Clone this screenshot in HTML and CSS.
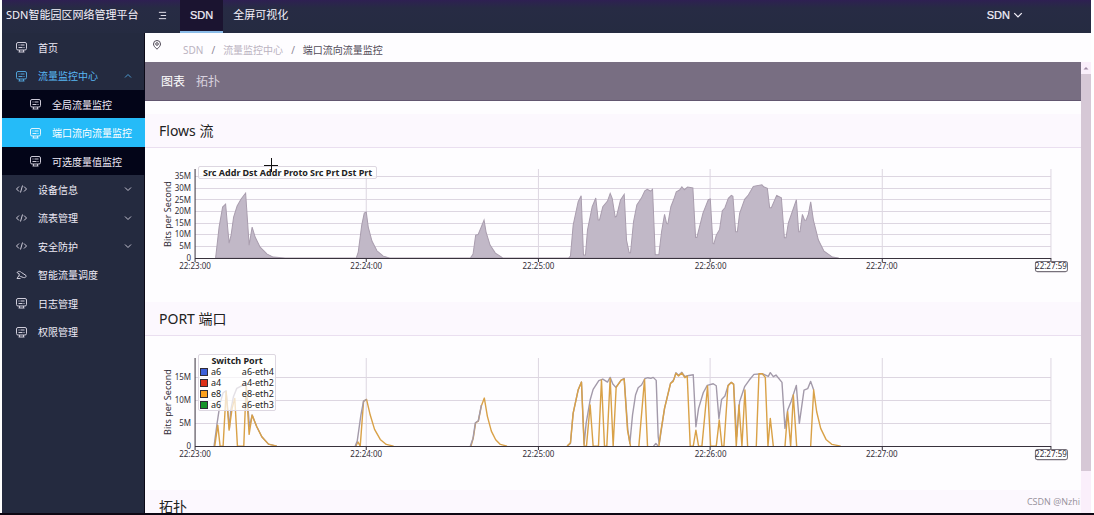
FILE: index.html
```
<!DOCTYPE html>
<html lang="zh-CN">
<head>
<meta charset="utf-8">
<title>SDN智能园区网络管理平台</title>
<link rel="stylesheet" href="styles.css">
</head>
<body>
<svg class="defs" aria-hidden="true">
  <symbol id="monitor" viewBox="0 0 12 12"><rect x="1" y="1.500" width="10" height="7.500" rx="1.500"/><path d="M3 4h1M5 4h4M3 6.500h4M8 6.500h1M4 9v2M8 9v2M3 11h6"/></symbol>
  <symbol id="code" viewBox="0 0 12 12"><path d="M3.500 3.500L1 6l2.500 2.500M8.500 3.500L11 6 8.500 8.500M7 2.500L5 9.500"/></symbol>
  <symbol id="flow" viewBox="0 0 12 12"><path d="M1.500 3.500C3 1.500 5 2.500 6 3.500L10.500 6.500C11 8 9.500 9 8 8.500L5 7.500C3.500 7 3 6 4 5M1.500 3.500L4 5M3.500 6.500L1.500 9.500H5"/></symbol>
  <symbol id="chevron" viewBox="0 0 8 8"><path d="M1 2.500l3 3 3-3"/></symbol>
</svg>
<div class="app">
  <header class="topbar">
    <h1 class="brand">SDN智能园区网络管理平台</h1>
    <button class="fold" aria-label="折叠菜单"><svg viewBox="0 0 10 10"><path d="M1 1.500h8M3 5h6M1 8.500h8"/></svg></button>
    <a class="tab tab-on" href="#">SDN</a>
    <a class="tab" href="#">全屏可视化</a>
    <button class="user">SDN <svg viewBox="0 0 8 8"><use href="#chevron"/></svg></button>
  </header>
  <nav class="side">
    <a class="item" href="#"><svg class="ico"><use href="#monitor"/></svg>首页</a>
    <a class="item open" href="#"><svg class="ico"><use href="#monitor"/></svg>流量监控中心<svg class="arrow up"><use href="#chevron"/></svg></a>
    <a class="item sub" href="#"><svg class="ico"><use href="#monitor"/></svg>全局流量监控</a>
    <a class="item sub current" href="#"><svg class="ico"><use href="#monitor"/></svg>端口流向流量监控</a>
    <a class="item sub" href="#"><svg class="ico"><use href="#monitor"/></svg>可选度量值监控</a>
    <a class="item" href="#"><svg class="ico"><use href="#code"/></svg>设备信息<svg class="arrow"><use href="#chevron"/></svg></a>
    <a class="item" href="#"><svg class="ico"><use href="#code"/></svg>流表管理<svg class="arrow"><use href="#chevron"/></svg></a>
    <a class="item" href="#"><svg class="ico"><use href="#code"/></svg>安全防护<svg class="arrow"><use href="#chevron"/></svg></a>
    <a class="item" href="#"><svg class="ico"><use href="#flow"/></svg>智能流量调度</a>
    <a class="item" href="#"><svg class="ico"><use href="#monitor"/></svg>日志管理</a>
    <a class="item" href="#"><svg class="ico"><use href="#monitor"/></svg>权限管理</a>
  </nav>
  <main class="main">
    <div class="crumbs">
      <svg class="pin" viewBox="0 0 10 10"><path d="M5 9.200C2.500 7 1.500 5.500 1.500 4a3.500 3.500 0 0 1 7 0C8.500 5.500 7.500 7 5 9.200z"/><circle cx="5" cy="4" r="1.300"/></svg>
      <a class="faint" href="#">SDN</a><span class="slash">/</span><a class="faint" href="#">流量监控中心</a><span class="slash">/</span><a href="#">端口流向流量监控</a>
    </div>
    <div class="frame">
      <div class="scroll">
        <div class="tools"><button class="view view-on">图表</button><button class="view">拓扑</button></div>
        <section>
          <h2 class="title">Flows 流</h2>
          <div class="chart">
            <svg class="plot" viewBox="145 148 935 154">
              <path class="grid" d="M195 176.500H1050M195 188.500H1050M195 199.500H1050M195 211.500H1050M195 223.500H1050M195 234.500H1050M195 246.500H1050M366 169V258M538 169V258M709.500 169V258M881.500 169V258M1050 169V258"/>
              <polygon class="area" points="215.5,258 219,227 222.5,207 225.500,204 227.500,227 229,243 231,235 233.500,217 237,206 241,199 245.500,193 249,245 252,227 255,237 260,247 267,254 273,257 285,258 356,258 358,252 361.500,225 364,213 366,212 368,227 371.700,241 376.700,250.700 383,256 390,258 470,258 472.700,254 475.300,235 477.700,234.500 481,226.700 483.700,220 485.700,232 489.700,245 495,253 502.700,258 568,258 570,256 572.700,225 577.700,201.700 580.700,195.700 583,255 585,255 587,230 591.700,206.700 595.300,198 597.700,220 599,220 602.300,206.700 607,201 609.700,193.300 611.700,198.300 614.700,217 616,216.300 620,200 623.700,194.300 626,240 628.700,252.700 630,252.700 633,221.700 636.300,205 640.700,198.300 644.300,190.700 646.700,189.300 650,191 652,189.300 654.700,254.700 658.300,254.700 661,231.700 664,214.300 666,223.300 667.300,223.700 670.300,206.700 673.300,199 675.700,191.700 679,190 681.300,186.700 683.700,189.700 687,187 692.300,188 695,237.300 696.300,237.300 702.300,213.300 707.700,199.700 709.700,199 712.300,243.300 713.300,243.700 715.700,235 719,229.300 721.700,210.700 724.300,207.700 727.700,198.300 730.700,195.300 732.300,196.300 735,231.700 736.700,231.700 739,213.300 744,199.300 747.700,195 752.700,186.300 761.300,184.700 763,186.700 766.700,188.300 769,207.700 770.700,207.700 776,195.300 780.700,197.700 783.700,237.700 785.300,237.700 787.700,222.700 795.700,199.700 798,231.700 799.300,231.700 801.700,214.300 804,220.300 805.300,220.300 807.700,214 810,201.700 812.700,220 817.700,240 823.300,251 831.700,257 838,258"/>
              <path class="axis" d="M195 169V262M195 258.500H1050V262M366 258V262M538 258V262M709.500 258V262M881.500 258V262"/>
              <g class="ylab"><text x="191" y="179">35M</text><text x="191" y="191">30M</text><text x="191" y="203">25M</text><text x="191" y="214">20M</text><text x="191" y="226">15M</text><text x="191" y="237">10M</text><text x="191" y="249">5M</text><text x="191" y="261">0</text></g>
              <rect class="pill" x="1034.500" y="261.500" width="32" height="10" rx="2"/>
              <g class="xlab"><text x="195" y="269">22:23:00</text><text x="366" y="269">22:24:00</text><text x="538" y="269">22:25:00</text><text x="710" y="269">22:26:00</text><text x="881" y="269">22:27:00</text><text x="1050" y="269">22:27:59</text></g>
              <text class="unit" transform="translate(171 214) rotate(-90)">Bits per Second</text>
            </svg>
            <table class="legend"><tr><th>Src Addr</th><th>Dst Addr</th><th>Proto</th><th>Src Prt</th><th>Dst Prt</th></tr></table>
            <svg class="cross" viewBox="0 0 14 14"><path d="M7.500 0v14M0 7.500h14"/></svg>
          </div>
        </section>
        <section>
          <h2 class="title">PORT 端口</h2>
          <div class="chart">
            <svg class="plot" viewBox="145 336 935 154">
              <path class="grid" d="M195 377.500H1050M195 400.500H1050M195 423.500H1050M366 358V446M538 358V446M709.500 358V446M881.500 358V446M1050 358V446"/>
              <g class="lines" transform="translate(140 340) scale(.3333)">
                <polyline class="total" points="222,318 231,250 240,190 249,158 258,152 268,265 272,210 280,170 290,145 303,138 318,130 328,260 336,225 350,260 365,290 385,312 410,318"/>
                <polyline class="port" points="224,318 233,255 240,318 249,318 258,155 267,270 276,205 284,175 292,318 311,318 318,138 327,283 336,225 350,260 365,290 385,312 410,318"/>
                <polyline class="port" points="647,318 653,305 660,318 670,184 679,178 690,225 703,268 720,298 738,313 760,318"/>
                <polyline class="total" points="645,318 651,303 662,225 670,183 679,178"/>
                <polyline class="port" points="992,318 999,293 1006,248 1014,243 1023,198 1032,174 1041,228 1053,273 1066,299 1080,313 1100,318"/>
                <polyline class="total" points="990,318 998,295 1005,248 1014,242 1023,195"/>
              </g>
              <g class="lines" transform="translate(540 340) scale(.3333)">
                <polyline class="total" points="80,318 90,310 98,220 113,150 123,126 131,312 137,250 149,180 158,148 175,122 187,117 201,126 209,112 217,132 226,142 242,120 251,115 262,270 268,310 276,225 285,165 293,143 303,135 313,116 322,113 331,115 338,112 347,121 353,290 356,312 372,205 390,130 400,118 406,98 414,106 424,97 433,110 441,107 458,104 466,260 474,205 488,158 500,136 518,131 527,137 535,236 543,178 553,168 563,135 572,127 579,132 588,290 597,185 612,140 626,120 640,103 665,101 683,109 689,98 698,110 706,105 724,127 733,265 741,210 751,185 767,136 776,250 790,150 801,146 810,124 819,150"/>
                <polyline class="port" points="80,318 90,308 98,220 113,150 123,126 131,318 138,318 149,195 158,318 174,318 183,120 192,318 199,318 209,115 218,318 227,142 242,120 251,117 261,270 270,318"/>
                <polyline class="port" points="295,318 312,118 321,318"/>
                <polyline class="total" points="339,318 346,310 353,318"/>
                <polyline class="port" points="355,318 360,280 372,205 390,130 398,124 406,100 414,108 424,99 433,113 440,108 449,318 458,318 466,270 474,318 484,318 501,138 510,318 527,318 536,240 544,318 550,318 562,138 572,127 579,133 587,318 595,195 604,318 613,150 621,318"/>
                <polyline class="port" points="647,318 655,101 665,101 674,112 682,318 689,235 698,318"/>
                <polyline class="port" points="733,318 741,215 750,318 758,165 768,318"/>
                <polyline class="port" points="810,318 819,150 828,215 840,265 856,298 874,313 900,318"/>
              </g>
              <path class="axis" d="M195 358V450M195 446.500H1050V450M366 446V450M538 446V450M709.500 446V450M881.500 446V450"/>
              <g class="ylab"><text x="191" y="380">15M</text><text x="191" y="403">10M</text><text x="191" y="426">5M</text><text x="191" y="449">0</text></g>
              <rect class="pill" x="1034.500" y="449.500" width="32" height="10" rx="2"/>
              <g class="xlab"><text x="195" y="457">22:23:00</text><text x="366" y="457">22:24:00</text><text x="538" y="457">22:25:00</text><text x="710" y="457">22:26:00</text><text x="881" y="457">22:27:00</text><text x="1050" y="457">22:27:59</text></g>
              <text class="unit" transform="translate(171 402) rotate(-90)">Bits per Second</text>
            </svg>
            <table class="legend ports">
              <tr><th colspan="3">Switch Port</th></tr>
              <tr><td><i class="key blue"></i></td><td>a6</td><td>a6-eth4</td></tr>
              <tr><td><i class="key red"></i></td><td>a4</td><td>a4-eth2</td></tr>
              <tr><td><i class="key orange"></i></td><td>e8</td><td>e8-eth2</td></tr>
              <tr><td><i class="key green"></i></td><td>a6</td><td>a6-eth3</td></tr>
            </table>
          </div>
        </section>
        <section><h2 class="title">拓扑</h2></section>
      </div>
      <div class="bar"><svg viewBox="0 0 10 12"><path d="M2.500 7.500L5 5l2.500 2.500z"/></svg><div class="thumb"></div></div>
    </div>
    <span class="mark">CSDN @Nzhi</span>
  </main>
</div>
</body>
</html>
```
FILE: styles.css
```
* { box-sizing: border-box; }
body { margin: 0; background: #fff; color: #222; font-family: "Noto Sans", "Noto Sans CJK SC", sans-serif; }
button { border: 0; background: none; padding: 0; color: inherit; font: inherit; }
a { color: inherit; text-decoration: none; }
svg { fill: none; stroke: currentColor; }
.defs { display: none; }
.app { height: 100vh; padding: 0 3px 0 2px; border-bottom: 2px solid #0d0713; display: grid; grid-template: 33px minmax(0, 1fr) / 143px minmax(0, 1fr); overflow: hidden; }

.topbar { grid-column: 1 / 3; display: flex; align-items: stretch; background: linear-gradient(#2e2052, #272b44 8px, #252b41); color: #f4f1fa; font-size: 11px; line-height: 30px; }
.brand { margin: 0; padding-left: 4px; width: 142px; font-size: 11px; font-weight: 400; white-space: nowrap; }
.fold { width: 36px; display: flex; align-items: center; justify-content: center; padding-bottom: 2px; }
.fold svg { width: 9px; height: 9px; }
.tab { padding: 0 10px; font-size: 11px; white-space: nowrap; }
.tab-on, .user { font-family: "Liberation Sans", sans-serif; -webkit-text-stroke: 0.2px; }
.tab-on { background: #1b1430; border-bottom: 2px solid #8bbce8; }
.user { margin-left: auto; padding-right: 68px; display: flex; align-items: center; gap: 3px; height: 30px; font-size: 11px; }
.user svg { width: 10px; height: 10px; }

.side { display: grid; grid-template-rows: repeat(11, 1fr); height: 100%; padding-bottom: 167px; background: #242a3f; border-right: 1px solid #0c0a18; color: #eeeaf6; font-size: 10px; }
.item { display: flex; align-items: center; padding: 0 13px; white-space: nowrap; }
.ico { width: 13px; height: 12px; margin-right: 10px; opacity: 0.85; }
.arrow { width: 8px; height: 8px; margin-left: auto; opacity: 0.8; }
.up { transform: rotate(180deg); }
.open { color: #58b7f3; }
.sub { padding-left: 27px; background: #030518; }
.current { background: #25bbf8; color: #fff; }

.main { position: relative; display: grid; grid-template-rows: 29px minmax(0, 1fr); background: #fefdff; min-width: 0; }
.crumbs { display: flex; align-items: center; gap: 8px; padding: 4px 7px 0; font-size: 10px; white-space: nowrap; color: #514b58; }
.pin { width: 10px; height: 10px; margin: 0 13px 10px 0; }
.faint { color: #bbb3c1; }
.slash { color: #8d8594; }
.frame { display: flex; min-height: 0; }
.scroll { flex: 1; min-width: 0; overflow: hidden; }
.tools { height: 39px; margin-bottom: 13px; padding: 0 16px; display: flex; align-items: center; gap: 11px; background: #786e82; border-bottom: 1px solid #625670; font-size: 12px; color: #d9d2df; }
.view-on { color: #fff; }
.title { margin: 0; height: 34px; padding: 0 14px; background: #fcf8fe; border-bottom: 1px solid #eadff0; font-size: 14px; line-height: 33px; font-weight: 400; }

.chart { position: relative; }
.plot { display: block; width: 100%; height: auto; font-size: 8px; }
.grid { stroke: #ddd6e1; }
.area { fill: #c1b8c7; stroke: #a99dae; }
.axis { stroke: #38323d; }
.pill { fill: #fff; stroke: #77717b; }
.plot text { fill: #332f38; stroke: none; }
.ylab { text-anchor: end; }
.xlab, .unit { text-anchor: middle; }
.unit { font-size: 9px; }
.lines polyline { vector-effect: non-scaling-stroke; stroke-linejoin: round; stroke-width: 1.4; }
.total { stroke: #a39aaa; }
.port { stroke: #d9a147; }
.legend { position: absolute; left: 53px; top: 18px; padding: 0 3px; border: 1px solid #ddd7e1; border-radius: 2px; background: rgba(255, 255, 255, 0.7); border-spacing: 0; font-size: 9px; line-height: 11px; white-space: nowrap; }
.legend th, .legend td { padding: 0 1px; font-weight: 700; }
.legend td { font-weight: 400; }
.ports { width: 78px; padding: 0; }
.ports td:first-child { width: 11px; }
.ports td:last-child { text-align: right; }
.key { display: block; width: 8px; height: 8px; border: 1px solid #302c36; }
.blue { background: #3c60d8; }
.red { background: #dc3018; }
.orange { background: #fba01c; }
.green { background: #169428; }
.cross { position: absolute; left: 119px; top: 10px; width: 14px; height: 14px; color: #111; }

.bar { width: 10px; background: #faeffb; color: #9d8aa3; }
.bar svg { display: block; width: 10px; height: 12px; fill: currentColor; stroke: none; }
.thumb { height: calc(100% - 54px); background: #d6c8d6; }
.mark { position: absolute; right: 11px; bottom: 4px; font-family: "Open Sans", sans-serif; font-size: 9px; line-height: 14px; color: #96909a; }
```
